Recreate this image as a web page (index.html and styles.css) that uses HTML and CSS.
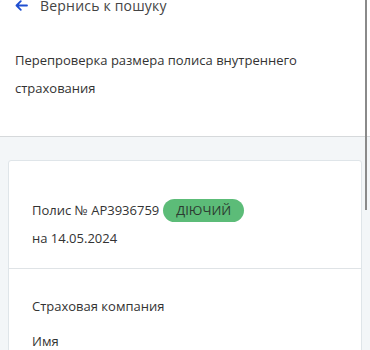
FILE: index.html
```html
<!doctype html>
<html lang="ru">
<head>
    <meta charset="UTF-8">
    <title>Полис</title>
    <link rel="stylesheet" href="styles.css">
</head>
<body>
    <div class="page">
        <div class="top">
            <a class="back" href="#">
                <svg class="backIcon" width="13" height="11" viewBox="0 0 13 11"><path d="M12 5.5H1.5M5.8 1.2L1.5 5.5l4.3 4.3" fill="none" stroke="#1f4fd1" stroke-width="1.8" stroke-linecap="round" stroke-linejoin="round"/></svg>
                <span>Вернись к пошуку</span>
            </a>
            <p class="title">Перепроверка размера полиса внутреннего страхования</p>
        </div>
        <div class="content">
            <div class="card">
                <div class="section">
                    <div class="policy">Полис № AP3936759 <span class="badge">ДІЮЧИЙ</span></div>
                    <div class="date">на 14.05.2024</div>
                </div>
                <div class="section">
                    <div class="row">Страховая компания</div>
                    <div class="row">Имя</div>
                </div>
            </div>
        </div>
    </div>
    <div class="thumb"></div>
</body>
</html>
```
FILE: styles.css
```css
*{
    margin: 0;
    padding: 0;
    box-sizing: border-box;
}
body{
    font-family: "Open Sans", "Noto Sans", sans-serif;
    color: #333;
    background: #f3f6f8;
    overflow: hidden;
}
.page{
    margin-top: -6px;
}
.top{
    background: #fff;
    border-bottom: 1px solid #d6d9db;
    padding: 0 15px 34px;
}
.back{
    display: flex;align-items: center;gap: 12px;
    height: 22px;
    text-decoration: none;color: #444;font-size: 14px;
}
.back span{
    letter-spacing: 0.2px;
}
.title{
    margin-top: 30px;
    font-size: 13px;line-height: 28px;
    width: 300px;
}
.content{
    padding: 23px 8px 0;
}
.card{
    background: #fff;
    border: 1px solid #dfe5e9;
    border-radius: 3px;
}
.section{
    padding: 37px 23px 16px;
}
.section + .section{
    border-top: 1px solid #dfe3e6;
    padding-top: 20px;
}
.policy{
    display: flex;align-items: center;gap: 4px;
    font-size: 13px;height: 24px;
}
.badge{
    background: #5cbc78;
    border-radius: 12px;
    padding: 0 13px;
    height: 23px;line-height: 23px;
    font-size: 13px;color: #2c3a30;
}
.date{
    font-size: 13px;line-height: 28px;margin-top: 2px;
}
.row{
    font-size: 13px;line-height: 35px;
}
.thumb{
    position: absolute;right: 3px;top: 0;
    width: 2px;height: 210px;background: #8a8a8a;
}
```
